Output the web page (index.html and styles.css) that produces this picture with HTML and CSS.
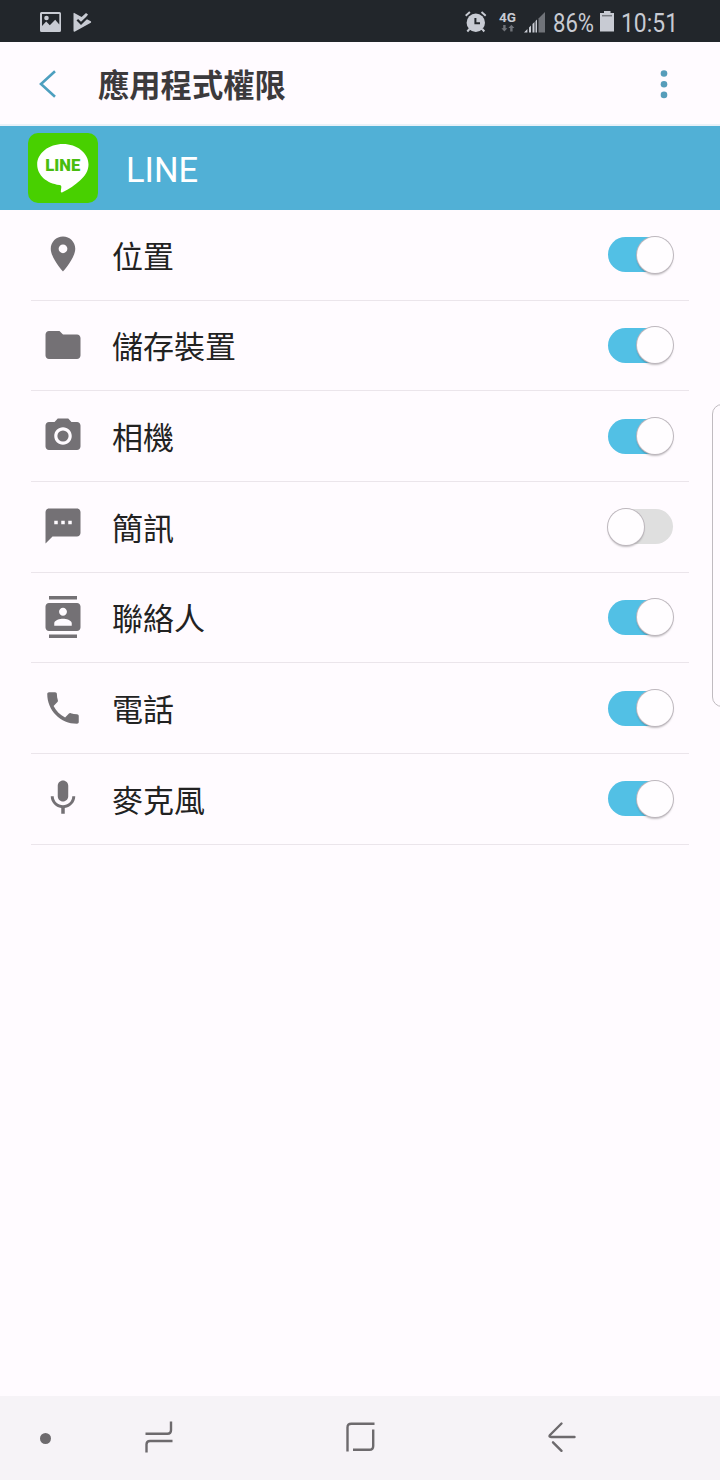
FILE: index.html
```
<!DOCTYPE html>
<html lang="zh-TW">
<head>
    <meta charset="UTF-8">
    <meta name="viewport" content="width=device-width, initial-scale=1.0">
    <title>應用程式權限</title>
    <link rel="stylesheet" href="styles.css">
</head>
<body>
    <!-- 狀態列 -->
    <div class="status">
        <svg class="st-image" width="22" height="21" viewBox="0 0 22 21">
            <path fill-rule="evenodd" d="M1.500 0h18a1.500 1.500 0 0 1 1.500 1.500v17a1.500 1.500 0 0 1-1.500 1.500h-18A1.500 1.500 0 0 1 0 18.500v-17A1.500 1.500 0 0 1 1.500 0zM2 2v12l4.200-4.400 3.600 3.600 5.400-5.400 4.100 4.600V2z"/>
            <circle cx="6.500" cy="6" r="2.300"/>
        </svg>
        <svg class="st-play" width="20" height="21" viewBox="0 0 20 21">
            <path d="M1.300 0.900L8.600 4.900 13 1 15 2.600 12.600 6.500 17.800 9.200Q18.700 10 17.800 10.800L2 19.600Q.500 20 .500 18.500V1.800Q.500.600 1.300.900z"/>
            <path class="st-check" d="M4.300 7.800L8 11.400 15.400 4.200"/>
        </svg>
        <svg class="st-alarm" width="22" height="22" viewBox="0 0 22 22">
            <circle cx="10.800" cy="11.700" r="9.200"/>
            <path class="st-bells" d="M.700 4.700L4.900 1.100M16.500 1.100L20.700 4.700M4.500 18L2.300 20.500M17.200 18L19.300 20.500"/>
            <path class="st-hands" d="M10.400 7V12.200H15"/>
        </svg>
        <svg class="st-net" width="18" height="22" viewBox="0 0 18 22">
            <text x="0" y="11" textLength="17" lengthAdjust="spacingAndGlyphs">4G</text>
            <path class="st-dim" d="M4.200 14h2.400v3.200H8.400L5.400 20.500 2.400 17.200H4.200zM11.200 20.500V17H9.400L12.400 13.700 15.400 17H13.600V20.500z"/>
        </svg>
        <svg class="st-signal" width="22" height="21" viewBox="0 0 22 21">
            <path class="st-dim" d="M14.500 6.500L21 0V20.500H14.500z"/>
            <path d="M0 20.500L3.400 17V20.500zM5 15.500L7 13.500V20.500H5zM8.500 12L10.500 10V20.500H8.500zM11.500 9L13 7.500V20.500H11.500z"/>
        </svg>
        <svg class="st-percent" width="42" height="30" viewBox="0 0 42 30">
            <text x="0" y="25" textLength="41" lengthAdjust="spacingAndGlyphs">86%</text>
        </svg>
        <svg class="st-battery" width="14" height="21" viewBox="0 0 14 21">
            <path d="M4 0H10.500V2H14V20.500H0V2H4z"/>
            <path class="st-level" d="M2 4.700H12"/>
        </svg>
        <svg class="st-clock" width="58" height="30" viewBox="0 0 58 30">
            <text x="0" y="25" textLength="57" lengthAdjust="spacingAndGlyphs">10:51</text>
        </svg>
    </div>

    <!-- 標題列 -->
    <div class="titlebar">
        <svg class="back" width="18" height="28" viewBox="0 0 18 28">
            <path d="M16 1.200L2 14 16 26.800"/>
        </svg>
        <h1>應用程式權限</h1>
        <svg class="more" width="8" height="28" viewBox="0 0 8 28">
            <circle cx="4" cy="3.500" r="3.300"/>
            <circle cx="4" cy="14.200" r="3.300"/>
            <circle cx="4" cy="24.900" r="3.300"/>
        </svg>
    </div>

    <div class="app">
        <svg width="70" height="70" viewBox="0 0 70 70">
            <rect width="70" height="70" rx="10" fill="#48d000"/>
            <path d="M35 11C49 11 60.500 20 60.500 31.500C60.500 38 57 43 52 47.500C47 52 41 56.500 34.500 59.200C33 59.800 32.600 59 32.900 57.500L33.300 54.500C33.500 52.900 33 52.300 31.500 52C18.500 50.500 9.200 42 9.200 31.500C9.200 20 21 11 35 11z" fill="#fff"/>
            <text class="logo-text" x="17.300" y="37.500" textLength="35" lengthAdjust="spacingAndGlyphs">LINE</text>
        </svg>
        <span>LINE</span>
    </div>

    <!-- 權限清單 -->
    <ul class="list">
        <li class="row">
            <svg class="icon" viewBox="0 0 24 24"><path d="M12 2C8.130 2 5 5.130 5 9c0 5.250 7 13 7 13s7-7.750 7-13c0-3.870-3.130-7-7-7zm0 9.500a2.500 2.500 0 0 1 0-5 2.500 2.500 0 0 1 0 5z"/></svg>
            <span class="label">位置</span>
            <span class="switch on"></span>
        </li>
        <li class="row">
            <svg class="icon" viewBox="0 0 24 24"><path d="M10 4H4c-1.100 0-1.990.9-1.990 2L2 18c0 1.100.9 2 2 2h16c1.100 0 2-.9 2-2V8c0-1.100-.9-2-2-2h-8l-2-2z"/></svg>
            <span class="label">儲存裝置</span>
            <span class="switch on"></span>
        </li>
        <li class="row">
            <svg class="icon" viewBox="0 0 24 24"><circle cx="12" cy="12" r="3.200"/><path d="M9 2L7.170 4H4c-1.100 0-2 .9-2 2v12c0 1.100.9 2 2 2h16c1.100 0 2-.9 2-2V6c0-1.100-.9-2-2-2h-3.170L15 2H9zm3 15c-2.760 0-5-2.240-5-5s2.240-5 5-5 5 2.240 5 5-2.240 5-5 5z"/></svg>
            <span class="label">相機</span>
            <span class="switch on"></span>
        </li>
        <li class="row">
            <svg class="icon" viewBox="0 0 24 24"><path d="M20 2H4c-1.100 0-1.990.9-1.990 2L2 22l4-4h14c1.100 0 2-.9 2-2V4c0-1.100-.9-2-2-2zM9 11H7V9h2v2zm4 0h-2V9h2v2zm4 0h-2V9h2v2z"/></svg>
            <span class="label">簡訊</span>
            <span class="switch"></span>
        </li>
        <li class="row">
            <svg class="icon" viewBox="0 0 24 24"><path d="M20 0H4v2h16V0zM4 24h16v-2H4v2zM20 4H4c-1.100 0-2 .9-2 2v12c0 1.100.9 2 2 2h16c1.100 0 2-.9 2-2V6c0-1.100-.9-2-2-2zm-8 2.750c1.240 0 2.250 1.010 2.250 2.250s-1.010 2.250-2.250 2.250S9.750 10.240 9.750 9 10.760 6.750 12 6.750zM17 17H7v-1.500c0-1.670 3.330-2.500 5-2.500s5 .83 5 2.500V17z"/></svg>
            <span class="label">聯絡人</span>
            <span class="switch on"></span>
        </li>
        <li class="row">
            <svg class="icon" viewBox="0 0 24 24"><path d="M6.620 10.790c1.440 2.830 3.760 5.140 6.590 6.590l2.200-2.200c.27-.27.67-.36 1.020-.24 1.120.37 2.330.57 3.570.57.550 0 1 .45 1 1V20c0 .55-.45 1-1 1-9.390 0-17-7.610-17-17 0-.55.450-1 1-1h3.500c.550 0 1 .45 1 1 0 1.250.2 2.450.57 3.570.110.350.030.740-.25 1.020l-2.200 2.200z"/></svg>
            <span class="label">電話</span>
            <span class="switch on"></span>
        </li>
        <li class="row">
            <svg class="icon" viewBox="0 0 24 24"><path d="M12 14c1.660 0 2.990-1.340 2.990-3L15 5c0-1.660-1.340-3-3-3S9 3.340 9 5v6c0 1.660 1.340 3 3 3zm5.300-3c0 3-2.540 5.100-5.300 5.100S6.700 14 6.700 11H5c0 3.410 2.720 6.230 6 6.720V21h2v-3.280c3.280-.48 6-3.300 6-6.720h-1.700z"/></svg>
            <span class="label">麥克風</span>
            <span class="switch on"></span>
        </li>
    </ul>

    <!-- 側邊面板把手 -->
    <div class="edge-handle"></div>

    <!-- 導覽列 -->
    <div class="navbar">
        <span class="nav-dot"></span>
        <svg class="nav-recent" width="28" height="32" viewBox="0 0 28 32">
            <path d="M.500 12.700H22.500Q26 12.700 26 9.200V.500M27.500 20H5Q1.500 20 1.500 23.500V31.500"/>
        </svg>
        <svg class="nav-home" width="30" height="30" viewBox="0 0 30 30">
            <path d="M1.500 29.500V5.500Q1.500 1.700 5.300 1.700H28.500M27.200 7.500V24Q27.200 27.800 23.400 27.800H7"/>
        </svg>
        <svg class="nav-back" width="28" height="30" viewBox="0 0 28 30">
            <path d="M13.500 1.500L2 13Q.600 15 3 15H26.500M5 20.300L13.500 28.800" stroke-linecap="round" stroke-linejoin="round"/>
        </svg>
    </div>
</body>
</html>
```

FILE: styles.css
```
* {
    box-sizing: border-box;
}
body {
    margin: 0;
    height: 1480px;
    display: flex;
    flex-direction: column;
    overflow: hidden;
    position: relative;
    background: #fffbff;
    font-family: Roboto, 'Noto Sans CJK TC', sans-serif;
}
svg {
    display: block;
    flex: none;
    overflow: visible;
}
.status {
    height: 42px;
    flex: none;
    display: flex;
    align-items: flex-start;
    padding: 11px 41px 0 40px;
    background: #22262b;
    fill: #c8cbd3;
}
.st-image {
    margin-top: 1px;
}
.st-play {
    margin: 1px 0 0 11px;
}
.st-check {
    fill: none;
    stroke: #22262b;
    stroke-width: 2.2;
}
.st-alarm {
    margin-left: auto;
}
.st-bells {
    stroke: #c8cbd3;
    stroke-width: 2;
}
.st-hands {
    fill: none;
    stroke: #22262b;
    stroke-width: 2;
}
.st-net {
    margin-left: 12px;
    font-size: 13.5px;
    font-weight: bold;
}
.st-dim {
    fill: #707379;
}
.st-signal {
    margin: 1px 0 0 7px;
}
.st-percent {
    margin: -4px 0 0 7px;
    font-size: 26px;
}
.st-battery {
    margin-left: 5px;
}
.st-level {
    stroke: #777a80;
    stroke-width: 1.5;
}
.st-clock {
    margin: -4px 0 0 7px;
    font-size: 26px;
}
.titlebar {
    height: 84px;
    flex: none;
    display: flex;
    align-items: center;
    padding: 1px 52px 0 39px;
    border-bottom: 2px solid #e9f1f8;
}
.back {
    fill: none;
    stroke: #4d9fbf;
    stroke-width: 2.6;
}
.titlebar h1 {
    margin: 0 auto 0 41px;
    padding-top: 6px;
    font-size: 31.3px;
    font-weight: 700;
    line-height: 44px;
    color: #3c3a3c;
}
.more {
    fill: #569dba;
}
.app {
    height: 84px;
    flex: none;
    display: flex;
    align-items: center;
    padding: 0 28px;
    gap: 28px;
    background: #51b0d6;
    color: #fff;
    font-size: 34.5px;
}
.app span {
    padding-top: 3px;
}
.logo-text {
    fill: #48bd10;
    font-size: 17px;
    font-weight: 900;
}
.list {
    flex: 1;
    margin: 0;
    padding: 0 31px;
    list-style: none;
}
.row {
    height: 90.67px;
    display: flex;
    align-items: center;
    padding: 0 15px 1px 11px;
    border-bottom: 1.5px solid #ebe5eb;
}
.icon {
    width: 42px;
    height: 42px;
    fill: #747175;
}
.label {
    flex: 1;
    margin-left: 28px;
    padding-top: 7px;
    font-size: 31px;
    line-height: 44px;
    color: #222;
}
.switch {
    width: 65px;
    height: 35px;
    display: flex;
    align-items: center;
    margin: 1px 1px 0 0;
    background: #dfdfdf;
    border-radius: 18px;
}
.switch::before {
    content: "";
    flex: none;
    width: 36px;
    height: 36px;
    border-radius: 50%;
    background: #fffdff;
    box-shadow: 0 0 0 1px #bdb7bd, 0 2px 2px rgba(0, 0, 0, 0.25);
}
.switch.on {
    justify-content: flex-end;
    background: #52c0e5;
}
.edge-handle {
    position: absolute;
    top: 404px;
    right: -12px;
    width: 20px;
    height: 303px;
    border: 1.5px solid #c0bbc0;
    border-radius: 11px;
}
.navbar {
    height: 84px;
    flex: none;
    display: flex;
    align-items: center;
    padding: 0 144px 2px 40px;
    background: #f6f3f7;
    fill: none;
    stroke: #6d6a6d;
    stroke-width: 2.4;
}
.nav-dot {
    width: 11px;
    height: 11px;
    margin-top: 2px;
    border-radius: 50%;
    background: #6d6a6d;
}
.nav-recent {
    margin-left: 94px;
}
.nav-home {
    margin-left: 173px;
}
.nav-back {
    margin-left: auto;
}
```
